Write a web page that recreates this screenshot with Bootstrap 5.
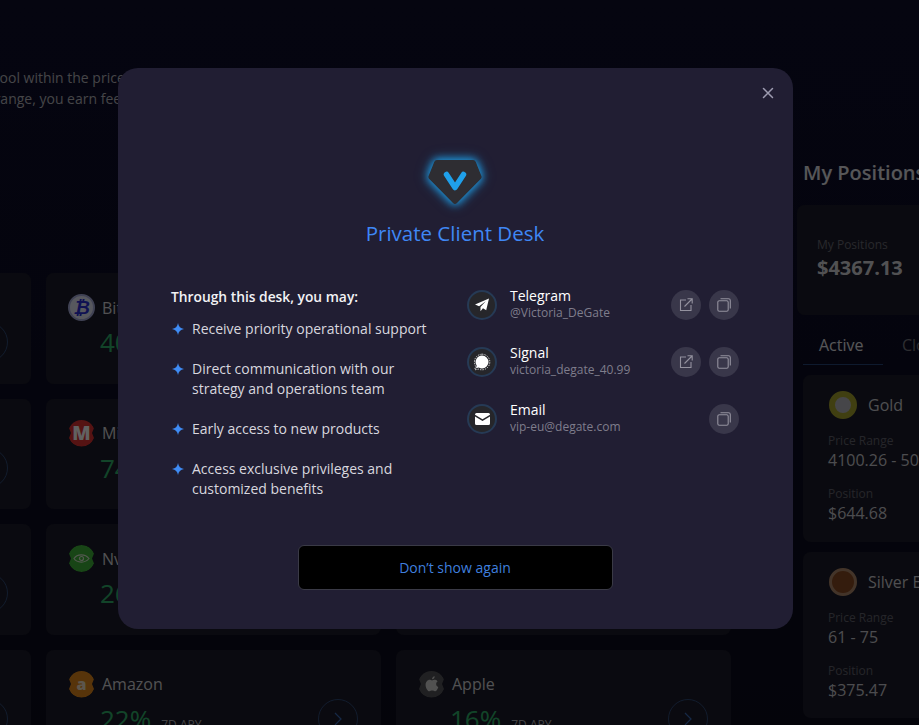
<!DOCTYPE html>
<html lang="en">
<head>
    <meta charset="UTF-8">
    <title>Private Client Desk</title>
    <link href="https://cdn.jsdelivr.net/npm/bootstrap@5.3.0/dist/css/bootstrap.min.css" rel="stylesheet">
    <style>
        html, body { height: 100%; overflow: hidden; }
        body { background: linear-gradient(#0e0e2c, #0c0c1c); font-family: "Open Sans", "Liberation Sans", sans-serif; color: #fff; }

        /* page behind the dialog */
        .page-wrap { height: 725px; overflow: hidden; }
        .main-side { width: 1061px; margin-left: -304px; flex: none; }
        .intro-text { margin: 67px 0 0 295px; height: 206px; font-size: 14px; line-height: 21px; color: #b5b5bd; white-space: nowrap; }
        .market-grid { display: grid; grid-template-columns: repeat(3, 335px); grid-auto-rows: 110.5px; gap: 15px; }
        .market-tile { background: #1c1c2a; border-radius: 8px; padding: 21px 23px 0 22px; display: flex; justify-content: space-between; }
        .coin-line { display: flex; align-items: center; gap: 7px; font-size: 16px; font-weight: 500; color: #d5d5d9; height: 27px; }
        .coin-dot { width: 27px; height: 27px; border-radius: 50%; flex: none; display: flex; align-items: center; justify-content: center; font-weight: 800; color: #fff; }
        .coin-chip { clip-path: path("M13.500 0A13.500 13.500 0 0 1 26 8.500L24 13.500 26 18.500A13.500 13.500 0 0 1 13.500 27 13.500 13.500 0 0 1 1 18.500L3 13.500 1 8.500A13.500 13.500 0 0 1 13.500 0Z"); }
        .coin-btc { font-size: 19px; font-style: italic; border: 2px solid #a9aedd; }
        .coin-mstr { font-size: 19px; }
        .apy-line { margin: 4px 0 0 32px; font-size: 26px; line-height: 34px; font-weight: 500; color: #30b46c; white-space: nowrap; }
        .apy-line span { font-size: 12px; font-weight: 400; color: #b0b0b8; margin-left: 10px; }
        .round-go { width: 40px; height: 40px; border: 1px solid #2f4a78; border-radius: 50%; margin-top: 28px; flex: none; display: flex; align-items: center; justify-content: center; }

        .side-panel { margin-left: 40px; width: 200px; flex: none; }
        .side-title { margin: 161px 0 20px 6px; font-size: 20px; line-height: 24px; font-weight: 600; color: #e2e2e6; white-space: nowrap; }
        .total-tile { background: #1c1c2a; border-radius: 8px 0 0 8px; height: 110px; padding: 31px 0 0 20px; }
        .total-tile small { display: block; font-size: 12px; line-height: 18px; color: #6a6a75; }
        .total-tile strong { font-size: 20px; line-height: 27px; color: #d6d6da; }
        .tab-line { margin: 15px 0 0 6px; display: flex; height: 35px; }
        .tab-line div { font-size: 16px; font-weight: 500; line-height: 30px; color: #e4e4e8; width: 80px; padding-left: 16px; border-bottom: 1px solid #27457a; }
        .tab-line div + div { color: #77777f; border: 0; padding-left: 19px; }
        .pos-tile { margin: 10px 0 0 6px; background: #1c1c2a; border-radius: 8px; height: 166.5px; padding: 16px 0 0 25px; white-space: nowrap; }
        .pos-head { display: flex; align-items: center; gap: 11px; font-size: 16px; font-weight: 500; color: #cfcfd4; height: 28px; margin: 0 0 13px 1px; }
        .pos-coin { width: 28px; height: 28px; border-radius: 50%; flex: none; }
        .coin-gold { background: #b9b9c0; border: 6px solid #a8a62e; }
        .coin-silver { background: #8a4a22; border: 3px solid #b08a6c; }
        .pos-label { font-size: 12px; line-height: 17px; color: #63636e; }
        .pos-val { font-size: 16px; line-height: 22px; color: #c9c9cf; margin-bottom: 14px; }

        /* dialog */
        .modal-backdrop.dim-layer { opacity: .62; background: #000; }
        .desk-dialog { max-width: none; width: 675px; margin: 68px 0 0 118px; }
        .desk-box { background: #211e33; border: 0; border-radius: 20px; height: 561px; padding: 0 54px 39px 53px; }
        .close-x { position: absolute; top: 19px; right: 19px; width: 12px; height: 12px; padding: 0; border: 0; background: none; display: flex; }
        .gem-logo { margin-top: 89px; width: 60px; height: 50px; filter: drop-shadow(0 0 4px #1e9fe8) drop-shadow(0 0 5px rgba(30, 159, 232, .6)); }
        .desk-title { margin: 13px 0 0; font-size: 20.5px; line-height: 27px; font-weight: 500; color: #3f87f5; }
        .perk-side { width: 262px; padding-top: 8px; }
        .perk-head { font-size: 13.8px; line-height: 20px; font-weight: 600; color: #f2f2f5; margin: 0 0 12px; }
        .perk-item { display: flex; gap: 7px; font-size: 14px; line-height: 20px; color: #d8d7df; margin-bottom: 20px; }
        .perk-item svg { flex: none; margin: 4px 1px 0 1px; }
        .contact-side { width: 272px; padding-top: 2px; }
        .contact-row { display: flex; align-items: center; height: 57px; margin-top: -9px; padding-top: 9px; margin-bottom: 9px; }
        .contact-ico { width: 30px; height: 30px; border-radius: 50%; flex: none; background: #26262a; border: 2px solid #263a55; display: flex; align-items: center; justify-content: center; }
        .contact-name { margin: -2px 0 0 13px; flex-grow: 1; font-size: 14px; line-height: 17px; font-weight: 500; color: #fff; }
        .contact-name small { display: block; font-size: 12px; line-height: 17px; font-weight: 400; color: #7f7d8c; }
        .tool-btn { width: 30px; height: 30px; border-radius: 50%; background: #39374a; border: 0; padding: 0; margin-left: 8px; display: flex; align-items: center; justify-content: center; flex: none; }
        .again-btn { width: 315px; height: 45px; background: #000; border: 1px solid #3a3a46; border-radius: 6px; color: #3f7fde; font-size: 14px; }
        .again-btn:hover { background: #000; color: #3f7fde; border-color: #3a3a46; }
    </style>
</head>
<body>
    <div class="page-wrap d-flex">
        <div class="main-side">
            <p class="intro-text">pool within the price range you have set<br>&nbsp;range, you earn fees</p>
            <div class="market-grid" id="marketGrid"></div>
        </div>
        <div class="side-panel">
            <div class="side-title">My Positions</div>
            <div class="total-tile">
                <small>My Positions</small>
                <strong>$4367.13</strong>
            </div>
            <div class="tab-line"><div>Active</div><div>Closed</div></div>
            <div class="pos-tile">
                <div class="pos-head"><span class="pos-coin coin-gold"></span>Gold</div>
                <div class="pos-label">Price Range</div>
                <div class="pos-val">4100.26 - 5000</div>
                <div class="pos-label">Position</div>
                <div class="pos-val">$644.68</div>
            </div>
            <div class="pos-tile">
                <div class="pos-head"><span class="pos-coin coin-silver"></span>Silver ETF</div>
                <div class="pos-label">Price Range</div>
                <div class="pos-val">61 - 75</div>
                <div class="pos-label">Position</div>
                <div class="pos-val">$375.47</div>
            </div>
        </div>
    </div>

    <div class="modal-backdrop show dim-layer"></div>

    <div class="modal d-block" tabindex="-1">
        <div class="modal-dialog desk-dialog">
            <div class="modal-content desk-box">
                <button type="button" class="close-x" aria-label="Close">
                    <svg width="12" height="12" viewBox="0 0 12 12"><path d="M1.500 1.500l9 9M10.500 1.500l-9 9" stroke="#9d9bb0" stroke-width="1.500" stroke-linecap="round"/></svg>
                </button>

                <div class="d-flex flex-column align-items-center">
                    <svg class="gem-logo" viewBox="0 0 60 50">
                        <path d="M12 3h36a3 3 0 0 1 2.800 1.900l5.600 14a3 3 0 0 1-.7 3.200L32 46a3 3 0 0 1-4 0L4.300 22.100a3 3 0 0 1-.7-3.200l5.600-14A3 3 0 0 1 12 3z" fill="#2e2d32"/>
                        <path d="M21.500 17.500L30 30.500l8.500-13" fill="none" stroke="#1fa0ea" stroke-width="5.500" stroke-linecap="round" stroke-linejoin="round"/>
                    </svg>
                    <h2 class="desk-title">Private Client Desk</h2>
                </div>

                <div class="d-flex justify-content-between mt-4 pt-2">
                    <div class="perk-side">
                        <p class="perk-head">Through this desk, you may:</p>
                        <div id="perkList"></div>
                    </div>
                    <div class="contact-side">
                        <div class="contact-row">
                            <span class="contact-ico">
                                <svg width="16" height="14" viewBox="0 0 14 13"><path d="M13.500.5L.5 6l3.800 1.600L10.500 3 5.600 8.300v4l2.300-2.700 3 1.700z" fill="#fff"/></svg>
                            </span>
                            <div class="contact-name">Telegram<small>@Victoria_DeGate</small></div>
                            <button type="button" class="tool-btn"><svg width="16" height="16" viewBox="0 0 16 16" fill="none" stroke="#94929f" stroke-width="1.100"><path d="M8 3H2.500v10.500H13V8M6.500 9.500L14 2M9.500 1.800H14.200V6.500"/></svg></button>
                            <button type="button" class="tool-btn"><svg width="16" height="16" viewBox="0 0 16 16" fill="none" stroke="#94929f" stroke-width="1.100"><rect x="1.800" y="3.800" width="10.400" height="10.400" rx="1.500"/><path d="M4.500 1.800h8a1.800 1.800 0 0 1 1.800 1.800v8"/></svg></button>
                        </div>
                        <div class="contact-row">
                            <span class="contact-ico">
                                <svg width="18" height="18" viewBox="0 0 18 18"><path d="M9 2.500a6.500 6.500 0 0 1 0 13 6.500 6.500 0 0 1-3.200-.9L3 15.300l.7-2.700A6.500 6.500 0 0 1 9 2.500z" fill="#fff"/><path d="M9 1.200a7.800 7.800 0 0 1 0 15.600 7.800 7.800 0 0 1-3.300-.7L1.800 16.800l.8-3.700A7.800 7.800 0 0 1 9 1.200z" fill="none" stroke="#fff" stroke-width=".8" stroke-dasharray="1.400 1.100"/></svg>
                            </span>
                            <div class="contact-name">Signal<small>victoria_degate_40.99</small></div>
                            <button type="button" class="tool-btn"><svg width="16" height="16" viewBox="0 0 16 16" fill="none" stroke="#94929f" stroke-width="1.100"><path d="M8 3H2.500v10.500H13V8M6.500 9.500L14 2M9.500 1.800H14.200V6.500"/></svg></button>
                            <button type="button" class="tool-btn"><svg width="16" height="16" viewBox="0 0 16 16" fill="none" stroke="#94929f" stroke-width="1.100"><rect x="1.800" y="3.800" width="10.400" height="10.400" rx="1.500"/><path d="M4.500 1.800h8a1.800 1.800 0 0 1 1.800 1.800v8"/></svg></button>
                        </div>
                        <div class="contact-row">
                            <span class="contact-ico">
                                <svg width="15" height="12" viewBox="0 0 15 12"><path d="M1.500 0h12A1.500 1.500 0 0 1 15 1.500v.3L7.500 6.300 0 1.800v-.3A1.500 1.500 0 0 1 1.500 0z" fill="#fff"/><path d="M0 3.400l7.500 4.500L15 3.400v7.100a1.500 1.500 0 0 1-1.500 1.500h-12A1.500 1.500 0 0 1 0 10.500z" fill="#fff"/></svg>
                            </span>
                            <div class="contact-name">Email<small>vip-eu@degate.com</small></div>
                            <button type="button" class="tool-btn"><svg width="16" height="16" viewBox="0 0 16 16" fill="none" stroke="#94929f" stroke-width="1.100"><rect x="1.800" y="3.800" width="10.400" height="10.400" rx="1.500"/><path d="M4.500 1.800h8a1.800 1.800 0 0 1 1.800 1.800v8"/></svg></button>
                        </div>
                    </div>
                </div>

                <div class="d-flex justify-content-center mt-auto">
                    <button type="button" class="btn again-btn">Don’t show again</button>
                </div>
            </div>
        </div>
    </div>

    <script src="https://cdn.jsdelivr.net/npm/bootstrap@5.3.0/dist/js/bootstrap.bundle.min.js"></script>
    <script>
    // Perks in the dialog
    const perks = [
        "Receive priority operational support",
        "Direct communication with our strategy and operations team",
        "Early access to new products",
        "Access exclusive privileges and customized benefits"
    ];
    document.getElementById("perkList").innerHTML = perks.map(p => `
        <div class="perk-item">
            <svg width="12" height="12" viewBox="0 0 12 12"><path d="M6 0c.5 3.500 2.500 5.500 6 6-3.500.5-5.500 2.500-6 6-.5-3.500-2.500-5.500-6-6 3.500-.5 5.500-2.500 6-6z" fill="#3f8cf5"/></svg>
            <span>${p}</span>
        </div>`).join("");

    // Market tiles behind the dialog
    const eye = `<svg width="17" height="11" viewBox="0 0 17 11" fill="none" stroke="#d9e8d0" stroke-width="1.200"><path d="M1 5.500C4 1 12 .5 16 5.500 12 10.500 4 10 1 5.500z"/><circle cx="8.500" cy="5.500" r="2"/></svg>`;
    const apple = `<svg width="14" height="17" viewBox="0 0 14 17" fill="#d6d6d6"><path d="M7 4.500C8 3.800 9 3.500 10.300 3.800c1 .2 1.800.8 2.300 1.600-2.200 1.400-1.800 4.500.7 5.500-.6 1.800-1.700 4.300-3.300 4.300-1 0-1.500-.6-2.800-.6s-1.900.6-2.800.6C2.600 15.200.6 11.800.6 8.900c0-3 2.100-5.200 4.300-5.100.8 0 1.500.4 2.100.7zM7 3.300C7 1.700 8.200.4 9.700.2 9.800 1.900 8.400 3.300 7 3.300z"/></svg>`;
    const markets = [
        {}, { name: "Bitcoin", pct: "40%", bg: "#e4e6f8", fg: "#2a2fd8", sym: "₿", cls: "coin-btc" }, {},
        {}, { name: "MicroStrategy", pct: "74%", bg: "#e03232", fg: "#fff", sym: "M", cls: "coin-chip coin-mstr" }, {},
        {}, { name: "Nvidia", pct: "26%", bg: "#3fb53a", fg: "#fff", sym: eye, cls: "coin-chip" }, {},
        {}, { name: "Amazon", pct: "22%", bg: "#e58a1c", fg: "#f2e3c8", sym: "a", cls: "coin-chip" },
        { name: "Apple", pct: "16%", bg: "#55555a", fg: "#fff", sym: apple, cls: "coin-chip" }
    ];
    document.getElementById("marketGrid").innerHTML = markets.map(m => `
        <div class="market-tile">
            <div>${m.name ? `
                <div class="coin-line"><span class="coin-dot ${m.cls}" style="background:${m.bg};color:${m.fg}">${m.sym}</span>${m.name}</div>
                <div class="apy-line">${m.pct}<span>7D APY</span></div>` : ""}
            </div>
            <span class="round-go"><svg width="8" height="14" viewBox="0 0 8 14" fill="none" stroke="#3a6ab8" stroke-width="1.200"><path d="M1 1l6 6-6 6"/></svg></span>
        </div>`).join("");
    </script>
</body>
</html>
